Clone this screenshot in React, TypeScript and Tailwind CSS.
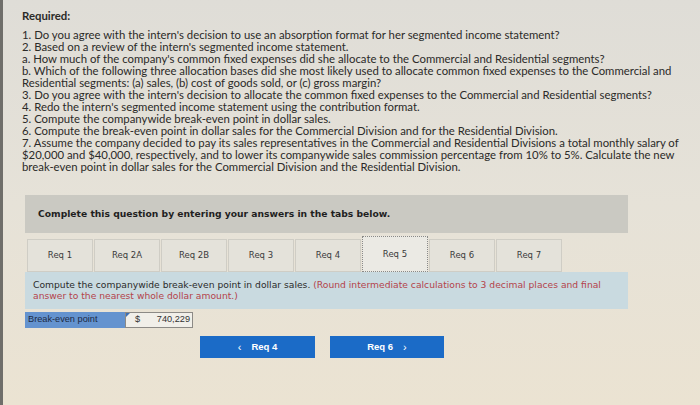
export default function App() {
  const tabs = ['Req 1', 'Req 2A', 'Req 2B', 'Req 3', 'Req 4', 'Req 5', 'Req 6', 'Req 7'];
  const lines = [
    "1. Do you agree with the intern's decision to use an absorption format for her segmented income statement?",
    "2. Based on a review of the intern's segmented income statement.",
    "a. How much of the company's common fixed expenses did she allocate to the Commercial and Residential segments?",
    'b. Which of the following three allocation bases did she most likely used to allocate common fixed expenses to the Commercial and',
    'Residential segments: (a) sales, (b) cost of goods sold, or (c) gross margin?',
    "3. Do you agree with the intern's decision to allocate the common fixed expenses to the Commercial and Residential segments?",
    "4. Redo the intern's segmented income statement using the contribution format.",
    '5. Compute the companywide break-even point in dollar sales.',
    '6. Compute the break-even point in dollar sales for the Commercial Division and for the Residential Division.',
    '7. Assume the company decided to pay its sales representatives in the Commercial and Residential Divisions a total monthly salary of',
    '$20,000 and $40,000, respectively, and to lower its companywide sales commission percentage from 10% to 5%. Calculate the new',
    'break-even point in dollar sales for the Commercial Division and the Residential Division.',
  ];

  return (
    <div className="h-[405px] w-[700px] overflow-hidden border-l-[3px] border-[#6f6e6a] bg-gradient-to-b from-[#dfddd7] via-[#e6e2d8] to-[#ebe3d2] pl-[19px] pt-[10px]">
      {/* Question text */}
      <div className="text-[11.35px] text-[#2b2a28] [font-family:Lato,'Open_Sans',sans-serif]">
        <div className="mb-[7px] h-[12px] font-bold leading-[12px]">Required:</div>
        {lines.map((line) => (
          <div key={line} className="h-[12px] whitespace-nowrap leading-[12px]">
            {line}
          </div>
        ))}
      </div>

      <div className="ml-[3px] mt-[22px] w-[603px] [font-family:'DejaVu_Sans',Verdana,sans-serif]">
        {/* Instruction bar */}
        <div className="flex h-[38px] items-center bg-[#cac9c2] pl-[13px] text-[9.2px] font-bold text-[#1f1f1f]">
          Complete this question by entering your answers in the tabs below.
        </div>

        {/* Tabs */}
        <div className="mt-[3px] flex items-end gap-px pl-[2px]">
          {tabs.map((t) =>
            t === 'Req 5' ? (
              <div
                key={t}
                className="flex h-[36px] w-[66px] items-center justify-center border border-dotted border-[#8a8a88] bg-[#ebeae4] text-[8.5px] text-[#3a3a3a]"
              >
                {t}
              </div>
            ) : (
              <div
                key={t}
                className="flex h-[33px] w-[66px] items-center justify-center border border-[#cfcdc5] bg-[#e4e2da] text-[8.5px] text-[#3a3a3a]"
              >
                {t}
              </div>
            )
          )}
        </div>

        {/* Prompt panel */}
        <div className="h-[37px] bg-[#c9dae0] pl-[8px] pt-[8px] text-[9.2px] leading-[10.5px] text-[#2b2b2b]">
          Compute the companywide break-even point in dollar sales.{' '}
          <span className="text-[#b4434b]">
            (Round intermediate calculations to 3 decimal places and final
            <br />
            answer to the nearest whole dollar amount.)
          </span>
        </div>

        {/* Answer row */}
        <div className="mt-[3px] flex h-[16px] items-stretch [font-family:'Liberation_Sans',Arial,sans-serif] text-[9.2px]">
          <div className="flex w-[100px] items-center bg-[#6493cf] pl-[3px] text-[#1c2a44]">Break-even point</div>
          <div className="relative flex w-[68px] items-center justify-between border border-[#8c8a86] bg-[#f1efe9] pl-[9px] pr-[2px] text-[#333]">
            <span className="absolute left-0 top-0 h-0 w-0 border-r-[4px] border-t-[4px] border-r-transparent border-t-[#3b6fb6]" />
            <span>$</span>
            <span>740,229</span>
          </div>
        </div>

        {/* Navigation buttons */}
        <div className="mt-[8px] flex gap-[15px] pl-[175px] [font-family:'Liberation_Sans',Arial,sans-serif] text-[9.5px] font-bold text-white">
          <div className="flex h-[22px] w-[115px] items-center justify-center gap-[10px] bg-[#1b6bc7]">
            <span className="text-[11px] font-normal">&lsaquo;</span>
            <span>Req 4</span>
          </div>
          <div className="flex h-[22px] w-[114px] items-center justify-center gap-[10px] bg-[#1b6bc7]">
            <span>Req 6</span>
            <span className="text-[11px] font-normal">&rsaquo;</span>
          </div>
        </div>
      </div>
    </div>
  );
}
